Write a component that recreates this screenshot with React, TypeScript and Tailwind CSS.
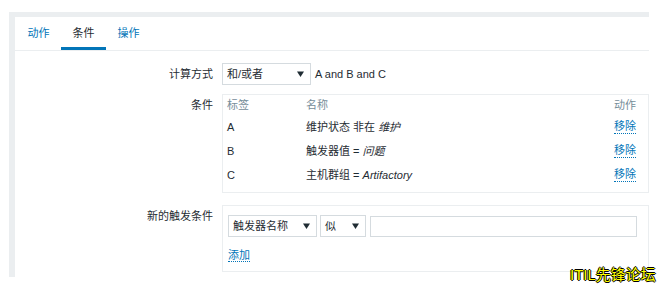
import type { ReactNode } from 'react'

const font = 'font-["Liberation_Sans","Noto_Sans_CJK_SC",sans-serif]'

function Caret() {
  return (
    <svg width="7" height="6" viewBox="0 0 7 6" className="shrink-0">
      <path d="M0 0.5h7L3.5 6z" fill="#1f2c33" />
    </svg>
  )
}

function Select({ value, width }: { value: string; width: string }) {
  return (
    <div className={`${width} h-[22px] flex items-center justify-between border border-[#d5dbdf] bg-white pl-[4px] pr-[6px]`}>
      <span>{value}</span>
      <Caret />
    </div>
  )
}

function Row({ label, children, top = 'items-center' }: { label: string; children: ReactNode; top?: string }) {
  return (
    <div className={`flex ${top}`}>
      <div className="w-[207px] shrink-0 pr-[9px] text-right leading-[22px]">{label}</div>
      {children}
    </div>
  )
}

function RemoveLink() {
  return (
    <span className="text-[#0275b8] border-b border-dotted border-[#0275b8] leading-[13px]">移除</span>
  )
}

const conditions = [
  { tag: 'A', text: '维护状态 非在 ', value: '维护' },
  { tag: 'B', text: '触发器值 = ', value: '问题' },
  { tag: 'C', text: '主机群组 = ', value: 'Artifactory' },
]

export default function App() {
  return (
    <div className={`relative w-[658px] h-[285px] bg-white pt-[12px] pl-[9px] text-[11px] text-[#1f2c33] ${font}`}>
      <div className="w-[640px] h-[265px] bg-[#ebeef0] pt-[5px] pl-[6px] flex">
        <div className="flex-1 bg-white">
          {/* Tabs */}
          <div className="flex h-[34px] border-b border-[#ebeef0] pl-[1px]">
            {['动作', '条件', '操作'].map((t) => (
              <div
                key={t}
                className={`w-[45px] flex items-center justify-center pt-[2px] border-b-[3px] ${
                  t === '条件' ? 'border-[#0275b8] text-[#1f2c33]' : 'border-transparent text-[#0275b8]'
                }`}
              >
                {t}
              </div>
            ))}
          </div>

          <div className="flex flex-col pt-[12px]">
            <Row label="计算方式">
              <Select value="和/或者" width="w-[89px]" />
              <span className="ml-[4px]">A and B and C</span>
            </Row>

            <div className="mt-[9px]">
              <Row label="条件" top="items-start">
                <div className="flex-1 border border-[#ebeef0] pl-[4px] pr-[12px] pb-[5px]">
                  <div className="flex h-[20px] items-center text-[#768d99]">
                    <span className="w-[79px]">标签</span>
                    <span className="flex-1">名称</span>
                    <span>动作</span>
                  </div>
                  {conditions.map((c) => (
                    <div key={c.tag} className="flex h-[24px] items-center">
                      <span className="w-[79px]">{c.tag}</span>
                      <span className="flex-1">
                        {c.text}
                        <i>{c.value}</i>
                      </span>
                      <RemoveLink />
                    </div>
                  ))}
                </div>
              </Row>
            </div>

            <div className="mt-[12px]">
              <Row label="新的触发条件" top="items-start">
                <div className="flex-1 h-[67px] border border-[#ebeef0] pl-[5px] pr-[11px] pt-[9px]">
                  <div className="flex items-center gap-[3px]">
                    <Select value="触发器名称" width="w-[89px]" />
                    <Select value="似" width="w-[46px]" />
                    <div className="ml-[1px] flex-1 h-[21px] border border-[#d5dbdf] bg-white" />
                  </div>
                  <div className="mt-[10px]">
                    <span className="text-[#0275b8] border-b border-dotted border-[#0275b8] leading-[13px]">添加</span>
                  </div>
                </div>
              </Row>
            </div>
          </div>
        </div>
      </div>

      <div className="absolute left-[570px] top-[266px] text-[15px] leading-[17px] text-[#ffff00] [text-shadow:1px_0_0_#000,-1px_0_0_#000,0_1px_0_#000,0_-1px_0_#000]">
        ITIL先锋论坛
      </div>
    </div>
  )
}
